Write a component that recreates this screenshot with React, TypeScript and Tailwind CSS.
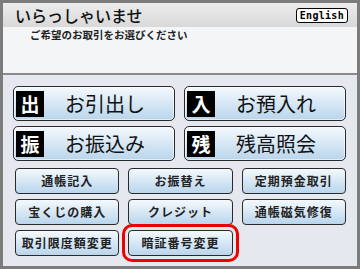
import React from "react";

const font = { fontFamily: '"Noto Sans CJK JP", "Noto Sans", sans-serif' };

function BigBtn({ badge, label }: { badge: string; label: string }) {
  return (
    <div className="flex h-[35px] items-center rounded-[5px] border border-[#2a2a2a] bg-gradient-to-b from-[#f4f9fd] to-[#b9d5ec] pl-[2px] shadow-[inset_0_0_0_1px_rgba(255,255,255,0.6)]">
      <div className="flex h-[26px] w-[28px] items-center justify-center bg-black text-[19px] font-bold leading-none text-white">
        {badge}
      </div>
      <div className="flex-1 pr-[8px] text-center text-[20px] leading-none text-[#111]">{label}</div>
    </div>
  );
}

function SmallBtn({ label, hl }: { label: string; hl?: boolean }) {
  return (
    <div
      className={
        "flex h-[26px] items-center justify-center rounded-[4px] border border-[#2a2a2a] bg-gradient-to-b from-[#f4f9fd] to-[#b9d5ec] text-[12px] font-bold tracking-[1px] text-[#222] " +
        (hl ? "outline-[3px] outline-solid outline-[#ee0000] outline-offset-[3px] rounded-[4px]" : "")
      }
    >
      {label}
    </div>
  );
}

export default function App() {
  return (
    <div style={font} className="h-[269px] w-[360px] border-[3px] border-[#7c7c7c] bg-[#e5e9ef]">
      <div className="flex h-[24px] items-center justify-between bg-gradient-to-b from-[#ececec] to-[#d9d9d9] pl-[12px] pr-[9px]">
        <span className="text-[16px] font-medium leading-none text-[#111]">いらっしゃいませ</span>
        <span className="mt-[1px] rounded-[3px] border-[1.5px] border-black bg-white px-[3px] text-[10px] font-bold leading-[13px] tracking-[0.3px] text-black" style={{ fontFamily: '"DejaVu Sans Mono", monospace' }}>
          English
        </span>
      </div>
      <div className="h-[46px] bg-[#f4f5f7] pl-[27px] pt-[1px] text-[10.5px] font-bold leading-[14px] text-[#222]">
        ご希望のお取引をお選びください
      </div>
      <div className="h-[2px] bg-[#8a8a8a]" />
      <div className="px-[10px] pt-[11px]">
        <div className="grid grid-cols-2 gap-x-[9px] gap-y-[5px] pr-[1px]">
          <BigBtn badge="出" label="お引出し" />
          <BigBtn badge="入" label="お預入れ" />
          <BigBtn badge="振" label="お振込み" />
          <BigBtn badge="残" label="残高照会" />
        </div>
        <div className="mt-[7px] grid grid-cols-3 gap-x-[9px] gap-y-[5px] pl-[2px] pr-[1px]">
          <SmallBtn label="通帳記入" />
          <SmallBtn label="お振替え" />
          <SmallBtn label="定期預金取引" />
          <SmallBtn label="宝くじの購入" />
          <SmallBtn label="クレジット" />
          <SmallBtn label="通帳磁気修復" />
          <SmallBtn label="取引限度額変更" />
          <SmallBtn label="暗証番号変更" hl />
        </div>
      </div>
    </div>
  );
}
